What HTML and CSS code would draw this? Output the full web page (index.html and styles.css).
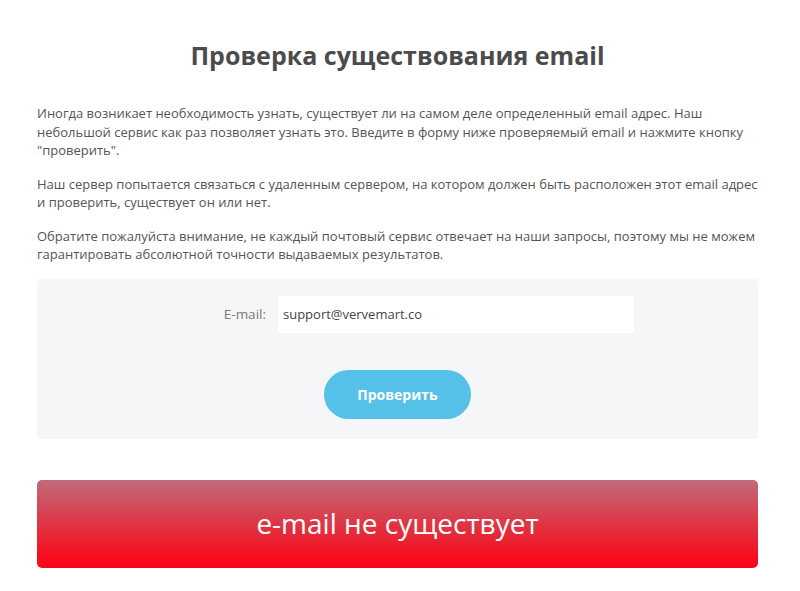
FILE: index.html
```html
<!DOCTYPE html>
<html lang="ru">
<head>
<meta charset="utf-8">
<title>Проверка существования email</title>
<link rel="stylesheet" href="styles.css">
</head>
<body>
<div class="page">
  <h1 class="title">Проверка существования email</h1>
  <div class="intro">
    <p>Иногда возникает необходимость узнать, существует ли на самом деле определенный email адрес. Наш небольшой сервис как раз позволяет узнать это. Введите в форму ниже проверяемый email и нажмите кнопку "проверить".</p>
    <p>Наш сервер попытается связаться с удаленным сервером, на котором должен быть расположен этот email адрес и проверить, существует он или нет.</p>
    <p>Обратите пожалуйста внимание, не каждый почтовый сервис отвечает на наши запросы, поэтому мы не можем гарантировать абсолютной точности выдаваемых результатов.</p>
  </div>
  <form class="panel">
    <div class="row">
      <label class="label" for="email">E-mail:</label>
      <input class="input" id="email" type="text" value="support@vervemart.co">
    </div>
    <div class="actions">
      <button class="btn" type="button">Проверить</button>
    </div>
  </form>
  <div class="result">e-mail не существует</div>
</div>
</body>
</html>
```

FILE: styles.css
```css
html, body {
  margin: 0;
  padding: 0;
  background: #ffffff;
}
body {
  font-family: "Open Sans", "Liberation Sans", sans-serif;
  color: #555555;
}
.page {
  width: 721px;
  margin-left: 37px;
  padding-top: 38px;
}
.title {
  margin: 0;
  text-align: center;
  font-family: "Open Sans", "Liberation Sans", sans-serif;
  font-weight: 700;
  font-size: 25px;
  line-height: 34px;
  color: #4b4b4d;
}
.intro {
  margin-top: 32px;
}
.intro p {
  margin: 0 0 15px 0;
  font-size: 13px;
  line-height: 18.5px;
  color: #555555;
}
.panel {
  margin-top: 15px;
  background: #f4f6f8;
  border-radius: 4px;
  height: 160px;
  padding-top: 17px;
  box-sizing: border-box;
}
.row {
  display: flex;
  align-items: center;
  padding-left: 183px;
}
.label {
  width: 46px;
  text-align: right;
  font-size: 13.5px;
  color: #7a7a7a;
  margin-right: 12px;
}
.input {
  width: 356px;
  height: 37px;
  box-sizing: border-box;
  border: none;
  border-radius: 2px;
  background: #ffffff;
  padding: 0 5px;
  font-family: "Open Sans", "Liberation Sans", sans-serif;
  font-size: 13px;
  color: #444444;
  outline: none;
}
.actions {
  display: flex;
  justify-content: center;
  margin-top: 37px;
}
.btn {
  width: 147px;
  height: 49px;
  border: none;
  border-radius: 25px;
  background: #56c1e8;
  color: #ffffff;
  font-family: "Open Sans", "Liberation Sans", sans-serif;
  font-weight: 700;
  font-size: 14px;
}
.result {
  margin-top: 41px;
  height: 88px;
  border-radius: 5px;
  background: linear-gradient(to bottom, #c06a7a 0%, #d8404f 40%, #f5101f 85%, #f8071a 100%);
  color: #ffffff;
  display: flex;
  align-items: center;
  justify-content: center;
  font-size: 28px;
  font-weight: 400;
  padding-bottom: 2px;
  box-sizing: border-box;
}
```
